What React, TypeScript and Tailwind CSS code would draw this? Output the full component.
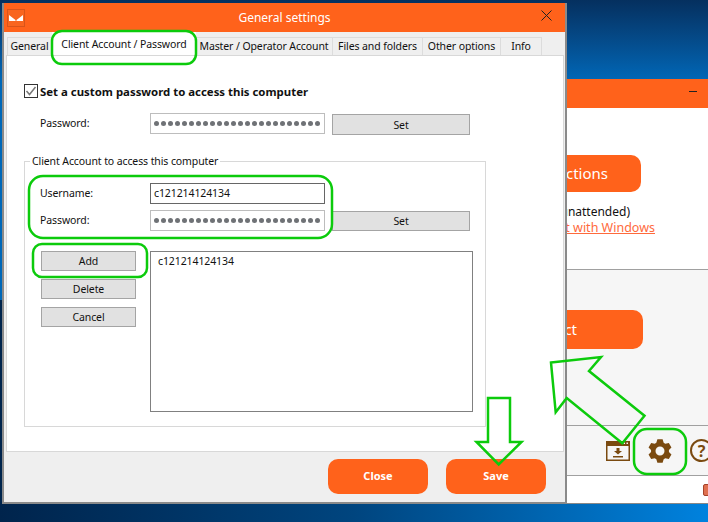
const orange = "bg-[#ff621b]";

// cog outline with 6 teeth, drawn around 12,12
function gearPath() {
  const pts: string[] = [];
  for (let i = 0; i < 6; i++) {
    const a = (i * Math.PI) / 3 - Math.PI / 2;
    const corners: [number, number][] = [
      [-0.42, 9],
      [-0.22, 12],
      [0.22, 12],
      [0.42, 9],
    ];
    for (const [da, r] of corners) {
      pts.push(`${(12 + r * Math.cos(a + da)).toFixed(2)} ${(12 + r * Math.sin(a + da)).toFixed(2)}`);
    }
  }
  return `M${pts.join("L")}Z M16.500 12a4.500 4.500 0 1 0-9 0a4.500 4.500 0 1 0 9 0Z`;
}

function Dots() {
  return (
    <div className="flex h-[21px] w-[175px] shrink-0 items-center gap-[2px] border border-[#bdbdbd] bg-white pl-[3px]">
      {Array.from({ length: 24 }).map((_, i) => (
        <span key={i} className="h-[5px] w-[5px] rounded-full bg-[#6f7276]" />
      ))}
    </div>
  );
}

function Tab({ label, className }: { label: string; className: string }) {
  return (
    <div className={`flex h-[18px] items-center justify-center border-t border-r border-[#dcdcdc] bg-[#efefef] pt-[1px] ${className}`}>
      {label}
    </div>
  );
}

function GrayButton({ label, className }: { label: string; className: string }) {
  return (
    <button className={`flex shrink-0 items-center justify-center border border-[#a4a4a4] bg-[#e1e1e1] pt-[2px] text-[#111] ${className}`}>
      {label}
    </button>
  );
}

function BackWindow() {
  return (
    <div className="absolute top-[79px] left-[300px] flex h-[425px] w-[420px] flex-col border-b border-[#888] bg-white">
      <div className={`flex h-[29px] shrink-0 justify-end ${orange}`}>
        <div className="mt-[12px] mr-[23px] h-[1px] w-[8px] bg-[#222]" />
      </div>
      <div className="flex h-[162px] shrink-0 flex-col items-end border-b border-[#a0a0a0]">
        <div className={`mt-[47px] mr-[79px] flex h-[37px] w-[200px] items-center justify-end rounded-[10px] pr-[33px] text-[15px] text-white ${orange}`}>
          Connections
        </div>
        <div className="mt-[12px] mr-[90px] text-[12px] leading-[16px] text-[#111]">(unattended)</div>
        <div className="mr-[65px] text-[12.500px] leading-[16px] text-[#ff6a3c] underline">Start with Windows</div>
      </div>
      <div className="flex h-[156px] shrink-0 flex-col items-end border-b border-[#a0a0a0] bg-[#f6f6f6]">
        <div className={`mt-[40px] mr-[77px] flex h-[39px] w-[200px] items-center justify-end rounded-[10px] pr-[66px] text-[15px] text-white ${orange}`}>
          Connect
        </div>
      </div>
      <div className="flex h-[50px] shrink-0 items-center gap-[18px] border-b border-[#a0a0a0] bg-[#f6f6f6] pl-[306px]">
        <svg width="24" height="20" viewBox="0 0 24 20" className="shrink-0">
          <path fill="#7a4a10" d="M0 0h24v20H0z" />
          <path fill="#f6f6f6" d="M1.500 5h21v13.500h-21zM17.500 1.500H19V3h-1.500zM20.500 1.500H22V3h-1.500z" />
          <path fill="#7a4a10" d="M10.500 7h3v3h2.500l-4 3.500-4-3.500h2.500zM7 15h10v1.500H7z" />
        </svg>
        <svg width="24" height="24" viewBox="0 0 24 24" className="shrink-0">
          <path fill="#7a4a10" fillRule="evenodd" d={gearPath()} />
        </svg>
        <div className="flex h-[23px] w-[23px] shrink-0 items-center justify-center rounded-full border-[2px] border-[#7a4a10] text-[16px] font-bold text-[#7a4a10]">
          ?
        </div>
      </div>
      <div className="flex grow items-center pl-[403px]">
        <div className="h-[12px] w-[12px] rounded-[2px] border border-[#a5432a] bg-[#e07050]" />
      </div>
    </div>
  );
}

function Dialog() {
  return (
    <div className="absolute top-[3px] left-[2px] flex h-[501px] w-[565px] flex-col border-2 border-t-0 border-[#8a8a8a] bg-[#efefef] text-[10.500px] tracking-[-0.1px] text-[#111]">
      <div className={`flex h-[29px] shrink-0 items-center justify-between pr-[13px] pl-[3px] text-white ${orange}`}>
        <div className="flex h-[18px] w-[18px] items-center justify-center border border-[#d9541a] bg-[#f9651f] pt-[1px]">
          <svg width="14" height="6" viewBox="0 0 14 6">
            <path fill="#fff" d="M0 0l6.500 5L6.500 6H0zM14 0L7.500 5V6H14z" />
          </svg>
        </div>
        <span className="ml-[3px] text-[12px] tracking-normal">General settings</span>
        <svg width="11" height="11" viewBox="0 0 11 11" className="mb-[4px]">
          <path stroke="#222" strokeWidth="1" d="M0.500 0.500l10 10M10.500 0.500l-10 10" />
        </svg>
      </div>
      <div className="flex h-[23px] shrink-0 items-end pl-[3px]">
        <Tab label="General" className="w-[45px] border-l" />
        <div className="flex h-[23px] w-[144px] items-center justify-center bg-white pt-[3px]">Client Account / Password</div>
        <Tab label="Master / Operator Account" className="w-[137px]" />
        <Tab label="Files and folders" className="w-[90px]" />
        <Tab label="Other options" className="w-[78px]" />
        <Tab label="Info" className="w-[41px]" />
      </div>
      <div className="ml-[2px] flex h-[397px] w-[558px] shrink-0 flex-col border border-[#d8d8d8] bg-white">
        <div className="mt-[28px] ml-[17px] flex h-[14px] items-center gap-[2px]">
          <span className="flex h-[14px] w-[14px] items-center justify-center border border-[#333] bg-white">
            <svg width="12" height="12" viewBox="0 0 12 12">
              <path fill="none" stroke="#777" strokeWidth="1.500" d="M1.500 6l3 3.500L10.500 2" />
            </svg>
          </span>
          <span className="pt-[1px] text-[11.400px] font-bold tracking-normal">Set a custom password to access this computer</span>
        </div>
        <div className="mt-[15px] flex items-start pl-[33px]">
          <span className="w-[110px] leading-[21px]">Password:</span>
          <Dots />
          <GrayButton label="Set" className="mt-[1px] ml-[7px] h-[21px] w-[138px]" />
        </div>
        <div className="relative mt-[26px] ml-[17px] h-[266px] w-[462px] border border-[#d8d8d8]">
          <span className="absolute -top-[8px] left-[5px] bg-white px-[2px] leading-[15px]">Client Account to access this computer</span>
          <div className="mt-[21px] flex items-center pl-[15px]">
            <span className="w-[110px]">Username:</span>
            <div className="flex h-[21px] w-[175px] items-center border border-[#666] pt-[1px] pl-[3px]">c121214124134</div>
          </div>
          <div className="mt-[6px] flex items-start pl-[15px]">
            <span className="w-[110px] leading-[21px]">Password:</span>
            <Dots />
            <GrayButton label="Set" className="mt-[1px] ml-[7px] h-[20px] w-[138px]" />
          </div>
          <div className="mt-[20px] flex pl-[16px]">
            <div className="flex w-[95px] flex-col gap-[8px]">
              <GrayButton label="Add" className="h-[20px] w-[95px]" />
              <GrayButton label="Delete" className="h-[20px] w-[95px]" />
              <GrayButton label="Cancel" className="h-[20px] w-[95px]" />
            </div>
            <div className="ml-[14px] h-[161px] w-[323px] border border-[#808080] pt-[2px] pl-[7px]">c121214124134</div>
          </div>
        </div>
      </div>
      <div className="flex grow items-start justify-end gap-[18px] pt-[7px] pr-[19px]">
        <button className={`h-[35px] w-[100px] rounded-[10px] text-[11px] font-bold tracking-normal text-white ${orange}`}>Close</button>
        <button className={`h-[35px] w-[100px] rounded-[10px] text-[11px] font-bold tracking-normal text-white ${orange}`}>Save</button>
      </div>
    </div>
  );
}

function Annotations() {
  return (
    <svg width="708" height="522" className="pointer-events-none absolute top-0 left-0" fill="none" stroke="#0ccb0c" strokeWidth="2.500">
      <rect x="52" y="31" width="144" height="33" rx="10" />
      <rect x="29" y="176" width="303" height="62" rx="14" />
      <rect x="33" y="244" width="114" height="33" rx="9" />
      <rect x="634" y="429" width="52" height="45" rx="13" />
      <path d="M488 398H510V442H521.500L498.700 464.500L476.500 442H488Z" />
      <path d="M551 362.500L601 357L589 371L644.500 415.700L622.300 443.300L566.700 398L555.700 412.300Z" />
    </svg>
  );
}

export default function App() {
  return (
    <div className="relative h-[522px] w-[708px] overflow-hidden" style={{ fontFamily: '"Noto Sans", Tahoma, sans-serif' }}>
      <div className="h-[300px] bg-gradient-to-b from-[#05305f] to-[#0068b8] to-[27%]" />
      <div className="h-[222px] bg-gradient-to-r from-[#00244c] via-[#00457f] to-[#0082de]" />
      <BackWindow />
      <Dialog />
      <Annotations />
    </div>
  );
}
